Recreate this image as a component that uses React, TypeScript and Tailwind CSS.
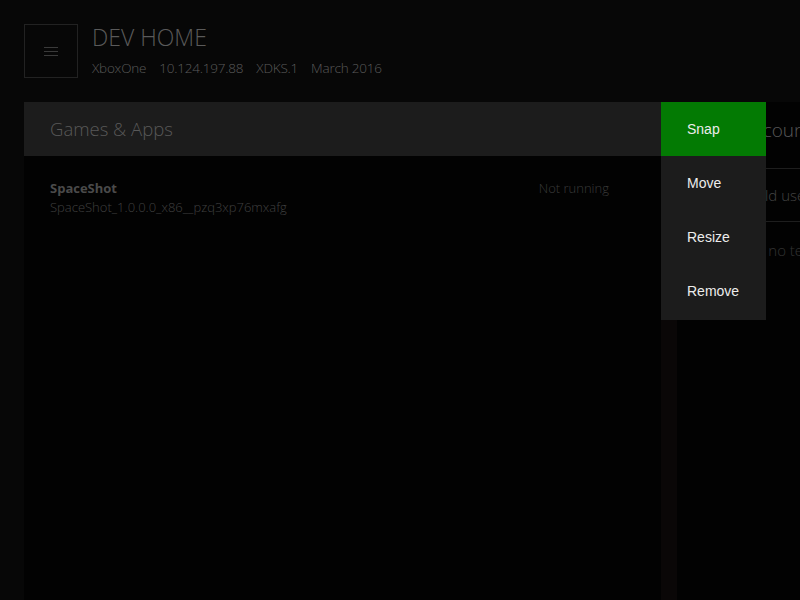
import React from 'react';

const menuItems = ['Snap', 'Move', 'Resize', 'Remove'];

export default function App() {
  return (
    <div
      className="relative h-[600px] w-[800px] overflow-hidden bg-[#070707]"
      style={{ fontFamily: '"Open Sans", "Noto Sans", sans-serif' }}
    >
      {/* Header */}
      <div className="flex h-[78px] items-start gap-[14px] pl-[24px] pt-[24px]">
        <div className="flex h-[54px] w-[54px] shrink-0 flex-col items-center justify-center gap-[3px] border border-[#222]">
          <span className="h-px w-[14px] bg-[#3a3a3a]" />
          <span className="h-px w-[14px] bg-[#3a3a3a]" />
          <span className="h-px w-[14px] bg-[#3a3a3a]" />
        </div>
        <div className="flex flex-col">
          <h1 className="text-[23px] font-light leading-[26px] text-[#5a5a5a]">DEV HOME</h1>
          <div className="mt-[9px] flex gap-[13px] text-[13.5px] font-light leading-[18px] tracking-[-0.2px] text-[#5a5a5a]">
            <span>XboxOne</span>
            <span>10.124.197.88</span>
            <span>XDKS.1</span>
            <span>March 2016</span>
          </div>
        </div>
      </div>

      {/* Main */}
      <div className="mt-[24px] flex h-[498px] pl-[24px]">
        {/* Games & Apps panel */}
        <div className="flex w-[637px] shrink-0 flex-col bg-[#020202]">
          <div className="flex h-[54px] items-center bg-[#1c1c1c] pl-[26px]">
            <span className="text-[18.5px] font-light text-[#585858]">Games &amp; Apps</span>
          </div>
          <div className="flex justify-between pl-[26px] pr-[52px] pt-[23px]">
            <div className="flex flex-col">
              <span className="text-[13px] font-bold leading-[18px] text-[#4a4a4a]">SpaceShot</span>
              <span className="text-[13px] font-light leading-[20px] text-[#404040]">
                SpaceShot_1.0.0.0_x86__pzq3xp76mxafg
              </span>
            </div>
            <span className="text-[13px] font-light leading-[18px] text-[#3a3a3a]">Not running</span>
          </div>
        </div>

        <div className="w-[16px] shrink-0 bg-[#0a0707]" />

        {/* Accounts panel */}
        <div className="flex min-w-0 flex-1 flex-col overflow-hidden whitespace-nowrap bg-[#020202] pl-[26px]">
          <div className="flex h-[67px] items-start border-b border-[#1e1e1e] pt-[14px]">
            <span className="text-[19px] font-light text-[#585858]">Test accounts</span>
          </div>
          <div className="flex h-[53px] items-center border-b border-[#1e1e1e]">
            <span className="text-[15px] font-light text-[#444]">Add a child user</span>
          </div>
          <div className="flex h-[56px] items-center">
            <span className="text-[15px] font-light text-[#333]">You have no test accounts</span>
          </div>
        </div>
      </div>

      {/* Context menu */}
      <div
        className="absolute left-[661px] top-[102px] flex w-[105px] flex-col bg-[#1c1c1c]"
        style={{ fontFamily: '"Liberation Sans", Arial, sans-serif' }}
      >
        {menuItems.map((item, i) => (
          <div
            key={item}
            className={`flex h-[54px] items-center pl-[26px] text-[14px] text-[#ececec] ${i === 0 ? 'bg-[#037a03]' : ''}`}
          >
            {item}
          </div>
        ))}
        <div className="h-[2px]" />
      </div>
    </div>
  );
}
